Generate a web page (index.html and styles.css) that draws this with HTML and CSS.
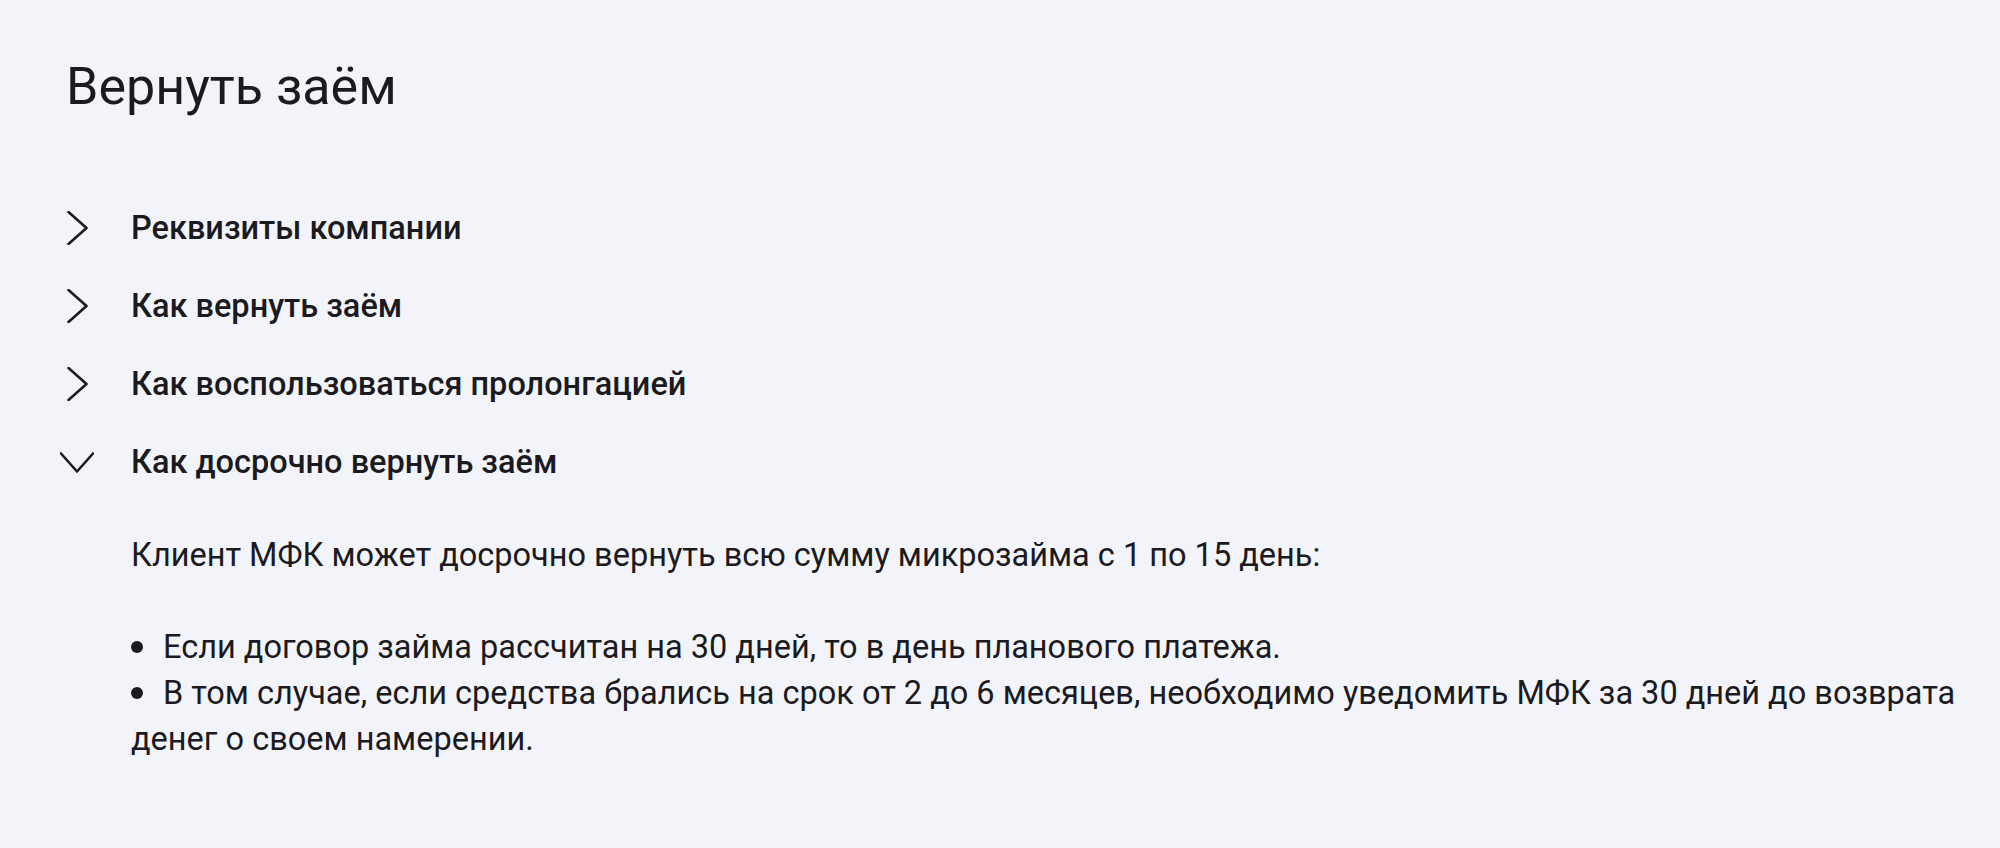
FILE: index.html
```html
<!DOCTYPE html>
<html lang="ru">
<head>
  <meta charset="UTF-8">
  <title>Вернуть заём</title>
  <link rel="stylesheet" href="styles.css">
</head>
<body>
  <main class="page">
    <h1 class="page-title">Вернуть заём</h1>

    <div class="faq">
      <div class="faq-item">
        <button class="faq-head" type="button">
          <svg class="chevron" viewBox="0 0 34 34" width="34" height="34"><path d="M8.5 1 L26.5 17 L8.5 33"/></svg>
          <span>Реквизиты компании</span>
        </button>
      </div>

      <div class="faq-item">
        <button class="faq-head" type="button">
          <svg class="chevron" viewBox="0 0 34 34" width="34" height="34"><path d="M8.5 1 L26.5 17 L8.5 33"/></svg>
          <span>Как вернуть заём</span>
        </button>
      </div>

      <div class="faq-item">
        <button class="faq-head" type="button">
          <svg class="chevron" viewBox="0 0 34 34" width="34" height="34"><path d="M8.5 1 L26.5 17 L8.5 33"/></svg>
          <span>Как воспользоваться пролонгацией</span>
        </button>
      </div>

      <div class="faq-item open">
        <button class="faq-head" type="button">
          <svg class="chevron" viewBox="0 0 34 34" width="34" height="34"><path d="M8.5 1 L26.5 17 L8.5 33"/></svg>
          <span>Как досрочно вернуть заём</span>
        </button>
        <div class="faq-body">
          <p>Клиент МФК может досрочно вернуть всю сумму микрозайма с 1 по 15 день:</p>
          <ul>
            <li>Если договор займа рассчитан на 30 дней, то в день планового платежа.</li>
            <li>В том случае, если средства брались на срок от 2 до 6 месяцев, необходимо уведомить МФК за 30 дней до возврата денег о своем намерении.</li>
          </ul>
        </div>
      </div>
    </div>
  </main>
</body>
</html>
```

FILE: styles.css
```css
body {
  margin: 0;
  background-color: #f3f4f9;
  color: #1a1a1f;
  font-family: Roboto, "Liberation Sans", sans-serif;
}
.page {
  padding: 59px 40px 0 60px;
}
.page-title {
  margin: 0;
  padding-left: 6px;
  font-size: 52px;
  font-weight: 400;
  line-height: 56px;
}
.faq {
  margin-top: 74px;
}
.faq-head {
  display: flex;
  align-items: center;
  gap: 37px;
  width: 100%;
  padding: 22px 0;
  border: none;
  background: none;
  color: inherit;
  font-family: inherit;
  font-size: 32.5px;
  font-weight: 500;
  line-height: 34px;
  text-align: left;
  cursor: pointer;
}
.chevron {
  flex: none;
  fill: none;
  stroke: #1a1a1f;
  stroke-width: 2.6;
  stroke-linecap: round;
  stroke-linejoin: round;
}
.open .chevron {
  transform: rotate(90deg);
}
.faq-body {
  padding-left: 71px;
  font-size: 32.5px;
  line-height: 46px;
}
.faq-body p {
  margin: 31px 0 0;
}
.faq-body ul {
  margin: 46px 0 0;
  padding: 0;
  list-style: none;
}
.faq-body li::before {
  content: "";
  display: inline-block;
  width: 12px;
  height: 12px;
  margin-right: 20px;
  border-radius: 50%;
  background: #1a1a1f;
  vertical-align: 5px;
}
```
